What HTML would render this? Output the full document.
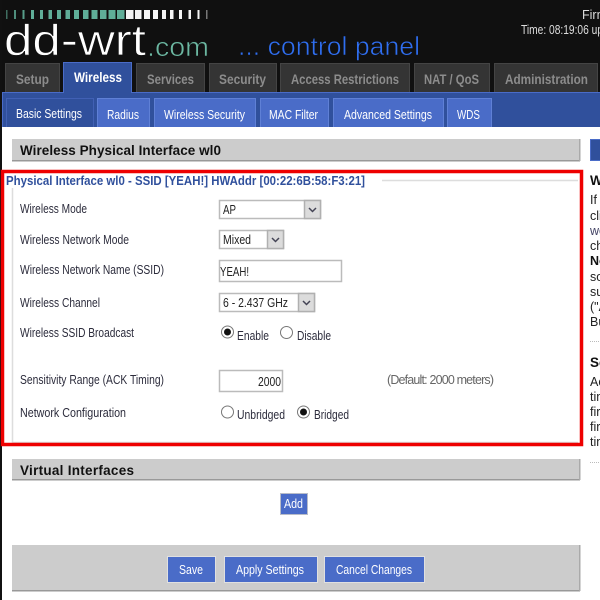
<!DOCTYPE html>
<html><head><meta charset="utf-8"><title>DD-WRT</title>
<style>
html,body{margin:0;padding:0;background:#fff;width:600px;height:600px;overflow:hidden}
svg{display:block;filter:blur(.35px)}
text{font-family:"Liberation Sans",sans-serif;font-size:12.5px;fill:#222}
.tab{font-weight:bold;font-size:13.5px;fill:#8c8c8c}
.sub{fill:#fff;font-size:13px}
.lab{fill:#2c2c3c;font-size:12.5px}
.h{font-weight:bold;font-size:13.5px;fill:#111}
.btn{fill:#fff;font-size:13px}
.side{fill:#222;font-size:12.5px}
</style></head><body>
<svg width="600" height="600" viewBox="0 0 600 600" xmlns="http://www.w3.org/2000/svg">
<rect width="600" height="600" fill="#fff"/>
<rect width="600" height="93" fill="#101010"/>
<rect x="0" y="0" width="2" height="600" fill="#111"/>
<!-- meter -->
<g fill="#5fae98">
<rect x="6" y="10" width="1.500" height="9" opacity=".6"/><rect x="14" y="10" width="2" height="9" opacity=".8"/><rect x="22.500" y="10" width="2" height="9" opacity=".9"/><rect x="31" y="10" width="3" height="9"/><rect x="40" y="10" width="3" height="9"/><rect x="48.500" y="10" width="3.500" height="9"/><rect x="57" y="10" width="4" height="9"/><rect x="65.500" y="10" width="4.500" height="9"/><rect x="74" y="10" width="5" height="9"/><rect x="83" y="10" width="5.500" height="9"/><rect x="91.500" y="10" width="6" height="9"/><rect x="100" y="10" width="6.500" height="9"/><rect x="108.500" y="10" width="7" height="9"/><rect x="117" y="10" width="7.500" height="9"/>
</g>
<g fill="#f4f4f4">
<rect x="126" y="10" width="7.500" height="9"/><rect x="135" y="10" width="6.500" height="9"/><rect x="144" y="10" width="6" height="9"/><rect x="153" y="10" width="5" height="9"/><rect x="162" y="10" width="4" height="9"/><rect x="170" y="10" width="3.500" height="9"/><rect x="179" y="10" width="3" height="9"/><rect x="188.500" y="10" width="2.500" height="9"/><rect x="197.500" y="10" width="2" height="9"/><rect x="206" y="10" width="1.500" height="9" fill="#777"/>
</g>
<!-- logo: fill painted first, background-coloured stroke thins the glyphs -->
<text x="4" y="55" textLength="142" lengthAdjust="spacingAndGlyphs" style="font-size:44px;fill:#fff;stroke:#101010;stroke-width:.7px">dd-wrt</text>
<text x="147" y="56" textLength="62" lengthAdjust="spacingAndGlyphs" style="font-size:27px;fill:#6cb8a2;stroke:#101010;stroke-width:.6px">.com</text>
<text x="238" y="55" textLength="182" lengthAdjust="spacingAndGlyphs" style="font-size:26px;fill:#2f6ef0;stroke:#101010;stroke-width:.6px">... control panel</text>
<text x="582" y="19" style="fill:#ddd">Firm</text>
<text x="521" y="34" textLength="82" lengthAdjust="spacingAndGlyphs" style="fill:#ddd">Time: 08:19:06 up</text>
<!-- main tabs -->
<g fill="#343434" stroke="#444">
<rect x="5.500" y="63.500" width="54" height="30"/><rect x="136.500" y="63.500" width="68" height="30"/><rect x="209.500" y="63.500" width="67" height="30"/><rect x="280.500" y="63.500" width="129" height="30"/><rect x="414.500" y="63.500" width="75" height="30"/><rect x="494.500" y="63.500" width="103" height="30"/>
</g>
<rect x="2" y="92" width="598" height="36" fill="#30509c"/>
<rect x="2.500" y="92.500" width="600" height="40" fill="none" stroke="#4a6cc8"/>
<path d="M63.500 92.500V62.500H131.500V92.500" fill="#30509c" stroke="#4a6cc8"/>
<rect x="64" y="90" width="67" height="4" fill="#30509c"/>
<text class="tab" x="16" y="84" textLength="33" lengthAdjust="spacingAndGlyphs">Setup</text>
<text class="tab" x="74" y="82" textLength="48" lengthAdjust="spacingAndGlyphs" style="fill:#fff">Wireless</text>
<text class="tab" x="147" y="84" textLength="47" lengthAdjust="spacingAndGlyphs">Services</text>
<text class="tab" x="219" y="84" textLength="47" lengthAdjust="spacingAndGlyphs">Security</text>
<text class="tab" x="291" y="84" textLength="108" lengthAdjust="spacingAndGlyphs">Access Restrictions</text>
<text class="tab" x="424" y="84" textLength="55" lengthAdjust="spacingAndGlyphs">NAT / QoS</text>
<text class="tab" x="505" y="84" textLength="83" lengthAdjust="spacingAndGlyphs">Administration</text>
<!-- sub tabs -->
<g fill="#4a6cc8" stroke="#5f80d6">
<rect x="97.500" y="98.500" width="52" height="30"/><rect x="154.500" y="98.500" width="101" height="30"/><rect x="260.500" y="98.500" width="68" height="30"/><rect x="333.500" y="98.500" width="110" height="30"/><rect x="447.500" y="98.500" width="44" height="30"/>
</g>
<rect x="6.500" y="98.500" width="87" height="30" fill="#30509c" stroke="#4160b4"/>
<text class="sub" x="16" y="118" textLength="66" lengthAdjust="spacingAndGlyphs">Basic Settings</text>
<text class="sub" x="107" y="119" textLength="32" lengthAdjust="spacingAndGlyphs">Radius</text>
<text class="sub" x="164" y="119" textLength="81" lengthAdjust="spacingAndGlyphs">Wireless Security</text>
<text class="sub" x="269" y="119" textLength="49" lengthAdjust="spacingAndGlyphs">MAC Filter</text>
<text class="sub" x="344" y="119" textLength="88" lengthAdjust="spacingAndGlyphs">Advanced Settings</text>
<text class="sub" x="457" y="119" textLength="23" lengthAdjust="spacingAndGlyphs">WDS</text>
<rect x="2" y="127" width="598" height="473" fill="#fff"/>
<!-- section 1 -->
<rect x="12" y="139" width="568" height="22" fill="#cccccc"/>
<rect x="12" y="160" width="568" height="1.500" fill="#999"/>
<rect x="579" y="139" width="1.500" height="22" fill="#aaa"/>
<text class="h" x="20" y="155" textLength="201" lengthAdjust="spacing">Wireless Physical Interface wl0</text>
<!-- side -->
<rect x="590.500" y="139.500" width="12" height="21" fill="#30509c" stroke="#4a6cc8"/>
<text x="590" y="185" style="font-weight:bold;font-size:13.5px;fill:#111">Wireless</text>
<text class="side" x="590" y="204">If you</text>
<text class="side" x="590" y="220">client</text>
<text class="side" x="590" y="235" style="fill:#446">work</text>
<text class="side" x="590" y="250">chan</text>
<text class="side" x="590" y="265" style="font-weight:bold;fill:#111">Note</text>
<text class="side" x="590" y="281">some</text>
<text class="side" x="590" y="296">such</text>
<text class="side" x="590" y="311">("Af</text>
<text class="side" x="590" y="326">But</text>
<text class="side" x="590" y="367" style="font-weight:bold;font-size:13.5px;fill:#111">Sens</text>
<text class="side" x="590" y="386">Ack</text>
<text class="side" x="590" y="401">time</text>
<text class="side" x="590" y="416">firm</text>
<text class="side" x="590" y="431">firm</text>
<text class="side" x="590" y="446">time</text>
<path d="M590 341.500H600M590 462.500H600" stroke="#bbb" stroke-dasharray="1 1"/>
<!-- fieldset -->
<path d="M382 180.500H578M12.500 188V442.500H578" fill="none" stroke="#ddd" stroke-width="1.500"/>
<!-- highlight -->
<rect x="2.500" y="171.500" width="579" height="273" fill="none" stroke="#ee0000" stroke-width="3.500"/>
<text x="6" y="185" textLength="359" lengthAdjust="spacingAndGlyphs" style="font-weight:bold;fill:#30509c">Physical Interface wl0 - SSID [YEAH!] HWAddr [00:22:6B:58:F3:21]</text>
<!-- labels -->
<text class="lab" x="20" y="213" textLength="67" lengthAdjust="spacingAndGlyphs">Wireless Mode</text>
<text class="lab" x="20" y="244" textLength="109" lengthAdjust="spacingAndGlyphs">Wireless Network Mode</text>
<text class="lab" x="20" y="274" textLength="144" lengthAdjust="spacingAndGlyphs">Wireless Network Name (SSID)</text>
<text class="lab" x="20" y="307" textLength="80" lengthAdjust="spacingAndGlyphs">Wireless Channel</text>
<text class="lab" x="20" y="337" textLength="114" lengthAdjust="spacingAndGlyphs">Wireless SSID Broadcast</text>
<text class="lab" x="20" y="384" textLength="144" lengthAdjust="spacingAndGlyphs">Sensitivity Range (ACK Timing)</text>
<text class="lab" x="20" y="417" textLength="106" lengthAdjust="spacingAndGlyphs">Network Configuration</text>
<!-- selects -->
<g fill="#fff" stroke="#bbb" stroke-width="1.500">
<rect x="219.500" y="200.500" width="101" height="18"/>
<rect x="219.500" y="230.500" width="64" height="18"/>
<rect x="219.500" y="293.500" width="95" height="18"/>
<rect x="219.500" y="260.500" width="122" height="21"/>
<rect x="219.500" y="370.500" width="63" height="21"/>
</g>
<g fill="#dcdcdc" stroke="#b0b0b0" stroke-width="1.500">
<rect x="304.500" y="200.500" width="16" height="18"/>
<rect x="267.500" y="230.500" width="16" height="18"/>
<rect x="298.500" y="293.500" width="16" height="18"/>
</g>
<path d="M309 208l3.500 3.500 3.500-3.500M272 238l3.500 3.500 3.500-3.500M303 301l3.500 3.500 3.500-3.500" fill="none" stroke="#445" stroke-width="1.500"/>
<text x="223" y="214" textLength="13" lengthAdjust="spacingAndGlyphs">AP</text>
<text x="223" y="244" textLength="28" lengthAdjust="spacingAndGlyphs">Mixed</text>
<text x="220" y="276" textLength="29" lengthAdjust="spacingAndGlyphs">YEAH!</text>
<text x="223" y="307" textLength="65" lengthAdjust="spacingAndGlyphs">6 - 2.437 GHz</text>
<text x="258" y="386" textLength="23" lengthAdjust="spacingAndGlyphs">2000</text>
<!-- radios -->
<g fill="#fff" stroke="#777">
<circle cx="227.500" cy="332" r="6"/><circle cx="286.500" cy="332.500" r="6"/><circle cx="227.500" cy="412" r="6"/><circle cx="303.500" cy="412" r="6"/>
</g>
<circle cx="227.500" cy="332" r="3.500" fill="#111"/><circle cx="303.500" cy="412" r="3.500" fill="#111"/>
<text class="lab" x="237" y="340" textLength="32" lengthAdjust="spacingAndGlyphs">Enable</text>
<text class="lab" x="297" y="340" textLength="34" lengthAdjust="spacingAndGlyphs">Disable</text>
<text class="lab" x="237" y="419" textLength="48" lengthAdjust="spacingAndGlyphs">Unbridged</text>
<text class="lab" x="314" y="419" textLength="35" lengthAdjust="spacingAndGlyphs">Bridged</text>
<text x="387" y="384" textLength="107" lengthAdjust="spacing" style="fill:#666">(Default: 2000 meters)</text>
<!-- virtual -->
<rect x="12" y="459" width="568" height="21" fill="#cccccc"/>
<rect x="12" y="479" width="568" height="1.500" fill="#999"/>
<rect x="579" y="459" width="1.500" height="21" fill="#aaa"/>
<text class="h" x="20" y="475" textLength="114" lengthAdjust="spacing">Virtual Interfaces</text>
<rect x="280.500" y="493.500" width="27" height="21" fill="#4a6cc8" stroke="#b8bcc8"/>
<text class="btn" x="284" y="508" textLength="19" lengthAdjust="spacingAndGlyphs">Add</text>
<!-- footer -->
<rect x="12" y="545" width="568" height="46" fill="#cccccc"/>
<rect x="12" y="590" width="568" height="1.500" fill="#999"/>
<rect x="579" y="545" width="1.500" height="46" fill="#aaa"/>
<g fill="#4a6cc8" stroke="#e0e0e0">
<rect x="167.500" y="556.500" width="48" height="26"/><rect x="224.500" y="556.500" width="93" height="26"/><rect x="324.500" y="556.500" width="100" height="26"/>
</g>
<text class="btn" x="179" y="574" textLength="24" lengthAdjust="spacingAndGlyphs">Save</text>
<text class="btn" x="236" y="574" textLength="68" lengthAdjust="spacingAndGlyphs">Apply Settings</text>
<text class="btn" x="336" y="574" textLength="76" lengthAdjust="spacingAndGlyphs">Cancel Changes</text>
</svg>
</body></html>
